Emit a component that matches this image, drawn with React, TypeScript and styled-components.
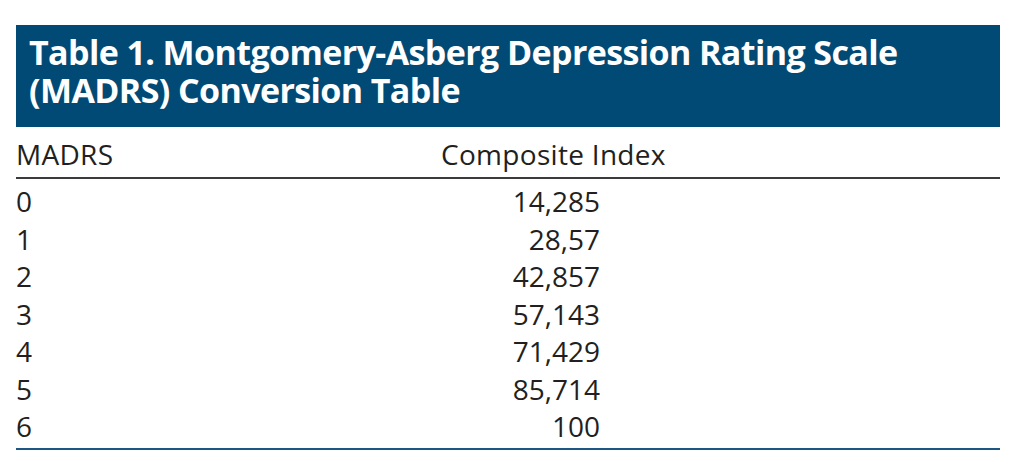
import React from "react";
import styled, { createGlobalStyle } from "styled-components";

const GlobalStyle = createGlobalStyle`
  html, body {
    margin: 0;
    padding: 0;
    background: #ffffff;
  }
  body {
    font-family: "Open Sans", "Noto Sans", "Liberation Sans", sans-serif;
    color: #231f20;
  }
`;

const Page = styled.div`
  padding: 25px 0 0 16px;
  width: 984px;
`;

const Caption = styled.div`
  background: #014a75;
  color: #ffffff;
  font-weight: 700;
  font-size: 34px;
  line-height: 38px;
  padding: 8px 0 18px 13px;
  letter-spacing: -0.6px;
`;

const Grid = styled.div`
  display: grid;
  grid-template-columns: 425px 159px 1fr;
  font-size: 28px;
`;

const HeadCell = styled.div`
  line-height: 36px;
  padding: 9px 0 5px;
  border-bottom: 2px solid #3b3b3b;
  white-space: nowrap;
  letter-spacing: 0.3px;
`;

const Cell = styled.div<{ $align?: "left" | "right"; $first?: boolean; $last?: boolean }>`
  line-height: 37.5px;
  text-align: ${(p) => p.$align ?? "left"};
  white-space: nowrap;
  ${(p) => (p.$first ? "padding-top: 4px;" : "")}
  ${(p) => (p.$last ? "padding-bottom: 2px; border-bottom: 2px solid #1c5685;" : "")}
`;

const rows: [string, string][] = [
  ["0", "14,285"],
  ["1", "28,57"],
  ["2", "42,857"],
  ["3", "57,143"],
  ["4", "71,429"],
  ["5", "85,714"],
  ["6", "100"],
];

export default function App() {
  return (
    <>
      <GlobalStyle />
      <Page>
        <Caption>
          Table 1. Montgomery-Asberg Depression Rating Scale
          <br />
          (MADRS) Conversion Table
        </Caption>
        <Grid>
          <HeadCell>MADRS</HeadCell>
          <HeadCell>Composite Index</HeadCell>
          <HeadCell />
          {rows.map(([a, b], i) => {
            const first = i === 0;
            const last = i === rows.length - 1;
            return (
              <React.Fragment key={a}>
                <Cell $first={first} $last={last}>{a}</Cell>
                <Cell $align="right" $first={first} $last={last}>{b}</Cell>
                <Cell $first={first} $last={last} />
              </React.Fragment>
            );
          })}
        </Grid>
      </Page>
    </>
  );
}
